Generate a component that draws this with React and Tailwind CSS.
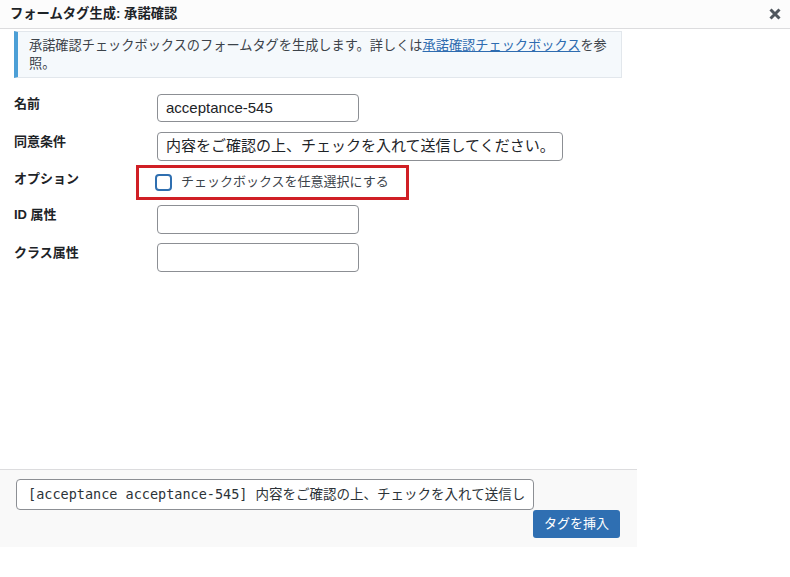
import React from "react";

const jp = { fontFamily: '"Liberation Sans", "Noto Sans CJK JP", sans-serif' };
const mono = { fontFamily: '"DejaVu Sans Mono", "Noto Sans CJK JP", monospace' };

function Label({ children }) {
  return (
    <div className="w-[143px] shrink-0 pl-[14px] pt-[1px] text-[13px] leading-[18px] font-bold text-[#1d2327]">
      {children}
    </div>
  );
}

export default function App() {
  return (
    <div className="w-[790px] h-[577px] bg-white flex flex-col overflow-hidden text-[#1d2327]" style={jp}>
      <div className="h-[29px] shrink-0 bg-[#fcfcfc] border-b border-[#dcdcde] flex items-center justify-between pl-[10px] pr-[9px]">
        <div className="text-[13.3px] font-bold leading-none">フォームタグ生成: 承諾確認</div>
        <svg width="12" height="12" viewBox="0 0 12 12" className="text-[#50575e]">
          <path d="M1.5 1.5 L10.5 10.5 M10.5 1.5 L1.5 10.5" stroke="currentColor" strokeWidth="3" strokeLinecap="butt" />
        </svg>
      </div>

      <div className="flex-1 flex flex-col">
        <div className="mt-[2px] ml-[14px] w-[608px] h-[47px] bg-[#f5f9fc] border border-[#e2e7ec] border-l-[4px] border-l-[#4c9fd6] pl-[11px] pt-[5px] text-[13.2px] leading-[18px] text-[#3c434a] whitespace-nowrap">
          承諾確認チェックボックスのフォームタグを生成します。詳しくは
          <span className="text-[#2e6cb0] underline">承諾確認チェックボックス</span>
          を参
          <br />
          照。
        </div>

        <div className="mt-[16px] flex items-start">
          <Label>名前</Label>
          <div className="ml-[14px] w-[202px] h-[28px] border border-[#8c8f94] rounded-[4px] bg-white flex items-center px-[8px] text-[15px]">
            acceptance-545
          </div>
        </div>

        <div className="mt-[10px] flex items-start">
          <Label>同意条件</Label>
          <div className="ml-[14px] w-[406px] h-[29px] border border-[#8c8f94] rounded-[4px] bg-white flex items-center px-[8px] text-[15px] whitespace-nowrap overflow-hidden">
            内容をご確認の上、チェックを入れて送信してください。
          </div>
        </div>

        <div className="mt-[8px] flex items-start relative h-[26px]">
          <Label>オプション</Label>
          <div className="ml-[12px] flex items-center h-[26px]">
            <div className="w-[17px] h-[17px] border-2 border-[#2f6fb0] rounded-[4px] bg-white" />
            <span className="ml-[9px] text-[13px] text-[#3c434a]">チェックボックスを任意選択にする</span>
          </div>
          <div className="absolute left-[136px] top-[-4px] w-[273px] h-[35px] border-[3px] border-[#d01f25]" />
        </div>

        <div className="mt-[10px] flex items-start">
          <Label>ID 属性</Label>
          <div className="ml-[14px] w-[202px] h-[29px] border border-[#8c8f94] rounded-[4px] bg-white" />
        </div>

        <div className="mt-[9px] flex items-start">
          <Label>クラス属性</Label>
          <div className="ml-[14px] w-[202px] h-[29px] border border-[#8c8f94] rounded-[4px] bg-white" />
        </div>
      </div>

      <div className="w-[637px] shrink-0 bg-[#f9f9f9] border-t border-[#dcdcde] pt-[9px] pb-[9px] flex flex-col">
        <div className="ml-[16px] w-[518px] h-[31px] border border-[#8c8f94] rounded-[4px] bg-white flex items-center pl-[11px] overflow-hidden whitespace-nowrap text-[13.5px] text-[#2c3338]" style={mono}>
          [acceptance acceptance-545] 内容をご確認の上、チェックを入れて送信し
        </div>
        <div className="flex justify-end pr-[17px]">
          <div className="w-[87px] h-[28px] bg-[#2f6fb2] rounded-[3px] text-white text-[13px] flex items-center justify-center">
            タグを挿入
          </div>
        </div>
      </div>
      <div className="h-[30px] shrink-0" />
    </div>
  );
}
